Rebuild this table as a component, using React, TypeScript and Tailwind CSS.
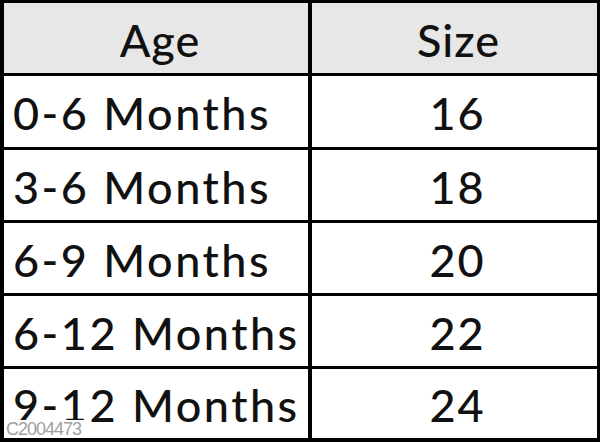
import React from "react";

const rows: [string, string][] = [
  ["0-6 Months", "16"],
  ["3-6 Months", "18"],
  ["6-9 Months", "20"],
  ["6-12 Months", "22"],
  ["9-12 Months", "24"],
];

export default function App() {
  return (
    <div
      className="relative w-[600px] h-[442px] overflow-hidden bg-white text-[#111]"
      style={{ fontFamily: "Lato, 'Open Sans', sans-serif" }}
    >
      <div className="grid h-full grid-cols-[304px_285px] grid-rows-[70px_71px_70px_70px_70px_69px] gap-x-[4px] gap-y-[3px] bg-black pt-[3px] pl-[4px] pr-[3px] pb-[4px]">
        <div className="flex items-center justify-center bg-[#e7e7e7] pt-[4px] pl-[8px] text-[45px] font-medium leading-none tracking-[1px]">
          Age
        </div>
        <div className="flex items-center justify-center bg-[#e7e7e7] pt-[4px] pl-[8px] text-[45px] font-medium leading-none tracking-[1px]">
          Size
        </div>
        {rows.map(([age, size]) => (
          <React.Fragment key={age}>
            <div className="flex items-center bg-white pt-[4px] pl-[9px] text-[45px] font-medium leading-none tracking-[2.5px]">
              {age}
            </div>
            <div className="flex items-center justify-center bg-white pt-[4px] pl-[6px] text-[45px] font-medium leading-none tracking-[2px]">
              {size}
            </div>
          </React.Fragment>
        ))}
      </div>
      <div
        className="absolute left-[4px] bottom-[4px] h-[18px] w-[84px] bg-white pl-[2px] text-[18px] leading-[18px] text-[#a0a0a0] tracking-[-1px]"
        style={{ fontFamily: "'Liberation Sans Narrow', 'Liberation Sans', sans-serif" }}
      >
        C2004473
      </div>
    </div>
  );
}
